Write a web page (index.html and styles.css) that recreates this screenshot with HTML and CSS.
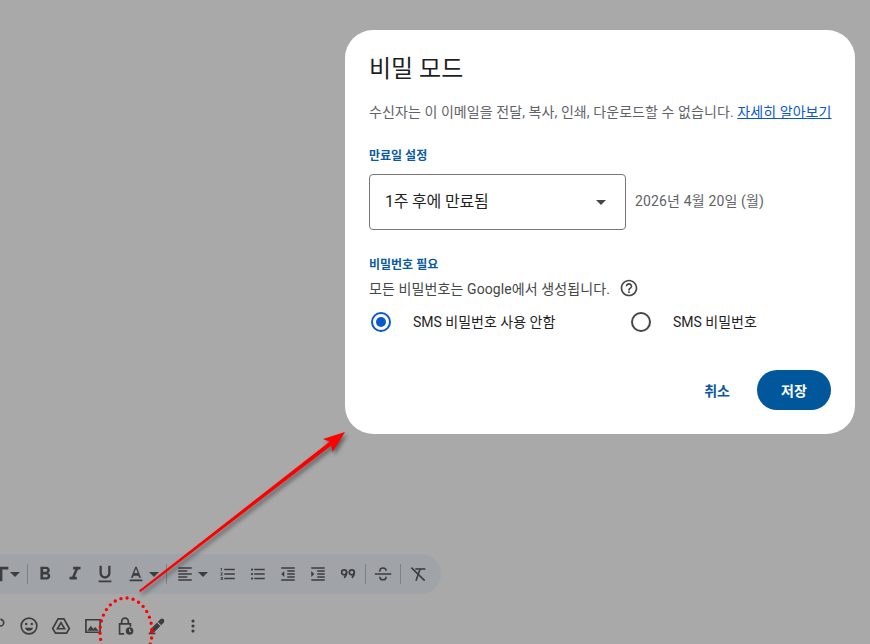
FILE: index.html
```html
<!DOCTYPE html>
<html lang="ko">
<head>
<meta charset="utf-8">
<title>비밀 모드</title>
<link rel="stylesheet" href="styles.css">
</head>
<body>
<main class="page">
  <div class="compose">
    <div class="format-bar">
      <svg class="ic ic-lg" viewBox="0 0 24 24"><path d="M4 4h16v3h-6.500v13h-3V7H4z"/></svg>
      <span class="caret caret-font"></span>
      <span class="sep sep-font"></span>
      <svg class="ic ic-lg" viewBox="0 0 24 24"><path d="M15.6 10.79c.97-.67 1.65-1.77 1.65-2.79 0-2.26-1.75-4-4-4H7v14h7.04c2.09 0 3.71-1.7 3.71-3.79 0-1.52-.86-2.82-2.15-3.42zM10 6.500h3c.83 0 1.500.67 1.500 1.500s-.67 1.500-1.500 1.500h-3v-3zm3.500 9H10v-3h3.500c.83 0 1.500.67 1.500 1.500s-.67 1.500-1.500 1.500z"/></svg>
      <svg class="ic ic-lg" viewBox="0 0 24 24"><path d="M10 4v3h2.210l-3.420 8H6v3h8v-3h-2.210l3.420-8H18V4z"/></svg>
      <svg class="ic ic-lg" viewBox="0 0 24 24"><path d="M12 17c3.310 0 6-2.690 6-6V3h-2.500v8c0 1.930-1.570 3.500-3.500 3.500S8.500 12.930 8.500 11V3H6v8c0 3.310 2.690 6 6 6zm-7 2v2h14v-2H5z"/></svg>
      <svg class="ic ic-lg ic-color" viewBox="0 0 24 24"><path d="M5 18v2h14v-2H5zm4.500-4.200h5l.9 2.200h2.100L12.750 4h-1.500L6.500 16h2.100l.9-2.200zM12 5.980L13.870 11h-3.740L12 5.980z"/></svg>
      <span class="caret caret-color"></span>
      <span class="sep sep-color"></span>
      <svg class="ic" viewBox="0 0 24 24"><path d="M15 15H3v2h12v-2zm0-8H3v2h12V7zM3 13h18v-2H3v2zm0 8h18v-2H3v2zM3 3v2h18V3H3z"/></svg>
      <span class="caret caret-align"></span>
      <svg class="ic" viewBox="0 0 24 24"><path d="M2 17h2v.5H3v1h1v.5H2v1h3v-4H2v1zm1-9h1V4H2v1h1v3zm-1 3h1.800L2 13.100v.9h3v-1H3.200L5 10.900V10H2v1zm5-6v2h14V5H7zm0 14h14v-2H7v2zm0-6h14v-2H7v2z"/></svg>
      <svg class="ic" viewBox="0 0 24 24"><path d="M4 10.500c-.83 0-1.500.67-1.500 1.500s.67 1.500 1.500 1.500 1.500-.67 1.500-1.500-.67-1.500-1.500-1.500zm0-6c-.83 0-1.500.67-1.500 1.500S3.170 7.500 4 7.500 5.500 6.830 5.500 6 4.830 4.500 4 4.500zm0 12c-.83 0-1.500.68-1.500 1.500s.68 1.500 1.500 1.500 1.500-.68 1.500-1.500-.67-1.500-1.500-1.500zM7 19h14v-2H7v2zm0-6h14v-2H7v2zm0-8v2h14V5H7z"/></svg>
      <svg class="ic" viewBox="0 0 24 24"><path d="M11 17h10v-2H11v2zm-8-5l4 4V8l-4 4zm0 9h18v-2H3v2zM3 3v2h18V3H3zm8 6h10V7H11v2zm0 4h10v-2H11v2z"/></svg>
      <svg class="ic" viewBox="0 0 24 24"><path d="M3 21h18v-2H3v2zM3 8v8l4-4-4-4zm8 9h10v-2H11v2zM3 3v2h18V3H3zm8 6h10V7H11v2zm0 4h10v-2H11v2z"/></svg>
      <svg class="ic ic-quote" viewBox="0 0 24 24"><g class="line"><circle cx="7.400" cy="10" r="3"/><path d="M10.400 10c0 3-1 5-3 6.500"/><circle cx="16.600" cy="10" r="3"/><path d="M19.600 10c0 3-1 5-3 6.500"/></g></svg>
      <span class="sep sep-tight"></span>
      <svg class="ic" viewBox="0 0 24 24"><path d="M1 11h22v2H1z"/><g class="line"><path d="M7.800 9V7.800c0-5 8.400-5 8.400 0"/><path d="M7.800 15.500c0 5.600 8.400 5.600 8.400 0"/></g></svg>
      <span class="sep sep-tight"></span>
      <svg class="ic ic-clear" viewBox="0 0 24 24"><g class="line line-bold"><path d="M2 2.500L22 22"/><path d="M8 4.500h15"/><path d="M15 5l-6 17"/></g></svg>
    </div>
    <div class="action-bar">
      <svg class="ic ic-act" viewBox="0 0 24 24"><g class="line"><path d="M14 8h-8a4 4 0 0 0 0 8h8"/><path d="M8 12h8a4 4 0 0 0 0-8"/></g></svg>
      <svg class="ic ic-act" viewBox="0 0 24 24"><g class="line"><circle cx="12" cy="12" r="9.400"/></g><circle cx="8.600" cy="9.600" r="1.500"/><circle cx="15.400" cy="9.600" r="1.500"/><path d="M7 14h10c-.8 2.400-2.800 3.800-5 3.800S7.800 16.400 7 14z"/></svg>
      <svg class="ic ic-act" viewBox="0 0 24 24"><path class="line" d="M8.500 3.500h7L22 15l-3.400 5.500H5.400L2 15z"/><path class="line" d="M12 8l4.300 7.300H7.700z"/></svg>
      <svg class="ic ic-act" viewBox="0 0 24 24"><path class="line" d="M3.500 4.500h17v15h-17z"/><path d="M5 17.800l4.500-6 3 3.700 2-2.400 4.500 4.700z"/></svg>
      <svg class="ic ic-act" viewBox="0 0 24 24"><path class="line" d="M8 9V6.500a4 4 0 0 1 8 0V9M11 21.500H5.500V9.500h13V13"/><circle cx="17.500" cy="18" r="4.500"/><path class="clock" d="M17.500 15.500V18l1.800 1"/></svg>
      <svg class="ic ic-act" viewBox="0 0 24 24"><path d="M3 21l1.500-5.500L16 4c1.300-1.300 3-1.300 4 0s1 2.700 0 4L8.500 19.500z"/><path d="M2 22h8v-2H2z"/><path class="clock" d="M12.500 7.500l4 4"/></svg>
      <svg class="ic ic-act ic-more" viewBox="0 0 24 24"><circle cx="12" cy="6" r="1.900"/><circle cx="12" cy="12" r="1.900"/><circle cx="12" cy="18" r="1.900"/></svg>
    </div>
  </div>

  <section class="dialog">
    <h1 class="title">비밀 모드</h1>
    <p class="intro">수신자는 이 이메일을 전달, 복사, 인쇄, 다운로드할 수 없습니다. <a class="more" href="#">자세히 알아보기</a></p>
    <h2 class="label label-expiry">만료일 설정</h2>
    <div class="expiry-row">
      <div class="select">
        <span class="lift-more">1주 후에 만료됨</span>
        <span class="select-caret"></span>
      </div>
      <span class="date lift-more">2026년 4월 20일 (월)</span>
    </div>
    <h2 class="label label-pass">비밀번호 필요</h2>
    <div class="hint">
      <span>모든 비밀번호는 Google에서 생성됩니다.</span>
      <svg class="help" viewBox="0 0 24 24"><path d="M11 18h2v-2h-2v2zm1-16C6.480 2 2 6.480 2 12s4.480 10 10 10 10-4.480 10-10S17.520 2 12 2zm0 18c-4.410 0-8-3.590-8-8s3.590-8 8-8 8 3.590 8 8-3.590 8-8 8zm0-14c-2.210 0-4 1.790-4 4h2c0-1.100.9-2 2-2s2 .9 2 2c0 2-3 1.750-3 5h2c0-2.250 3-2.500 3-5 0-2.210-1.790-4-4-4z"/></svg>
    </div>
    <div class="radios">
      <div class="radio-item radio-first"><span class="radio radio-on"></span><span class="lift">SMS 비밀번호 사용 안함</span></div>
      <div class="radio-item"><span class="radio"></span><span class="lift">SMS 비밀번호</span></div>
    </div>
    <div class="actions">
      <span class="cancel">취소</span>
      <span class="save">저장</span>
    </div>
  </section>

  <svg class="annotation" viewBox="0 0 870 644">
    <g class="arrow">
      <path d="M139 590.500L329.500 441.800L323 439L345 432L332.500 452L331.300 445.500L140.500 592z"/>
    </g>
    <ellipse class="dots" cx="126" cy="632" rx="26" ry="34"/>
  </svg>
</main>
</body>
</html>
```
FILE: styles.css
```css
* { box-sizing: border-box; }
html, body { margin: 0; height: 100%; }
body {
  font-family: Roboto, "Noto Sans CJK KR", sans-serif;
  background: #a9a9a9;
  overflow: hidden;
}
.page {
  position: relative;
  width: 870px;
  height: 644px;
  overflow: hidden;
  display: flex;
  flex-direction: column;
  justify-content: flex-end;
}

/* compose toolbars behind the scrim */
.compose { display: flex; flex-direction: column; height: 90px; }
.format-bar {
  width: 441px;
  height: 40px;
  background: #a0a3a8;
  border-radius: 0 20px 20px 0;
  display: flex;
  align-items: center;
  justify-content: flex-end;
  padding-right: 8px;
}
.action-bar {
  display: flex;
  align-items: center;
  height: 50px;
  gap: 12px;
  padding: 14px 0 0 0;
  margin-left: -13px;
}
.ic { width: 18px; height: 18px; fill: #3c3d3f; flex: none; margin: 0 6px; }
.ic-lg { width: 22px; height: 22px; margin: 0 4px; }
.ic-color { margin-left: 5px; }
.ic-quote { width: 20px; height: 20px; margin: 0 5px; }
.ic-clear { width: 16px; height: 16px; margin: 0 7px; }
.ic-act { width: 20px; height: 20px; margin: 0; }
.ic-more { margin-left: 4px; }
.line { fill: none; stroke: #3c3d3f; stroke-width: 2; }
.line-bold { stroke-width: 2.400; }
.clock { fill: none; stroke: #a9a9a9; stroke-width: 1.400; }
.caret {
  width: 0; height: 0; flex: none;
  border-left: 5px solid transparent;
  border-right: 5px solid transparent;
  border-top: 5px solid #3c3d3f;
}
.caret-font { margin: 0 7px 0 -6px; }
.caret-color { margin: 0 0 0 -2px; }
.caret-align { margin: 0 5px 0 -2px; }
.sep { width: 1px; height: 20px; background: #7d8084; flex: none; }
.sep-font { margin-right: 2px; }
.sep-color { margin: 0 3px 0 7px; }
.sep-tight { margin: 0 2px; }

/* dialog */
.dialog {
  position: absolute;
  left: 345px;
  top: 30px;
  width: 510px;
  height: 404px;
  background: #fff;
  border-radius: 28px;
  padding: 25px 24px 24px;
  color: #444746;
}
.lift { padding-bottom: 2px; }
.lift-more { padding-bottom: 4px; }
.title { margin: 0; font-size: 24px; font-weight: 400; line-height: 28px; color: #1f1f1f; }
.intro { margin: 19px 0 0; font-size: 14px; line-height: 20px; color: #5f6368; white-space: nowrap; letter-spacing: .08px; }
.more { color: #0b57d0; }
.label { margin: 0; font-size: 12px; font-weight: 700; line-height: 16px; color: #0b5a9c; }
.label-expiry { margin-top: 26px; }
.expiry-row { display: flex; align-items: center; gap: 9px; margin-top: 10px; }
.select {
  width: 257px;
  height: 56px;
  border: 1px solid #747775;
  border-radius: 4px;
  padding: 0 19px 0 15px;
  display: flex;
  align-items: center;
  justify-content: space-between;
  font-size: 16px;
  letter-spacing: -.2px;
  color: #1f1f1f;
}
.select-caret {
  width: 0; height: 0;
  border-left: 5px solid transparent;
  border-right: 5px solid transparent;
  border-top: 5px solid #444746;
}
.date { font-size: 14px; color: #5f6368; letter-spacing: .15px; }
.label-pass { margin-top: 27px; }
.hint { display: flex; align-items: center; gap: 9px; height: 20px; margin-top: 5px; font-size: 14px; color: #444746; letter-spacing: .1px; }
.help { width: 20px; height: 20px; fill: #444746; }
.radios { display: flex; margin-top: 14px; font-size: 14px; color: #1f1f1f; }
.radio-item { display: flex; align-items: center; gap: 22px; height: 20px; padding-left: 2px; }
.radio-first { width: 260px; }
.radio { width: 20px; height: 20px; border-radius: 50%; border: 2px solid #444746; flex: none; }
.radio-on { border-color: #0b57d0; background: #0b57d0; background-clip: content-box; padding: 3px; }
.actions { display: flex; justify-content: flex-end; align-items: center; gap: 27px; margin-top: 38px; font-size: 14px; font-weight: 700; }
.cancel { color: #0b5a9c; }
.save {
  width: 74px; height: 40px;
  border-radius: 20px;
  background: #00579c;
  color: #fff;
  display: flex; align-items: center; justify-content: center;
}

/* annotation drawn on top */
.annotation { position: absolute; left: 0; top: 0; width: 870px; height: 644px; pointer-events: none; }
.arrow { fill: #f00; filter: drop-shadow(2px 3px 2px rgba(0,0,0,.45)); }
.dots { fill: none; stroke: #f00; stroke-width: 3.400; stroke-linecap: round; stroke-dasharray: 0 6.200; }
```
